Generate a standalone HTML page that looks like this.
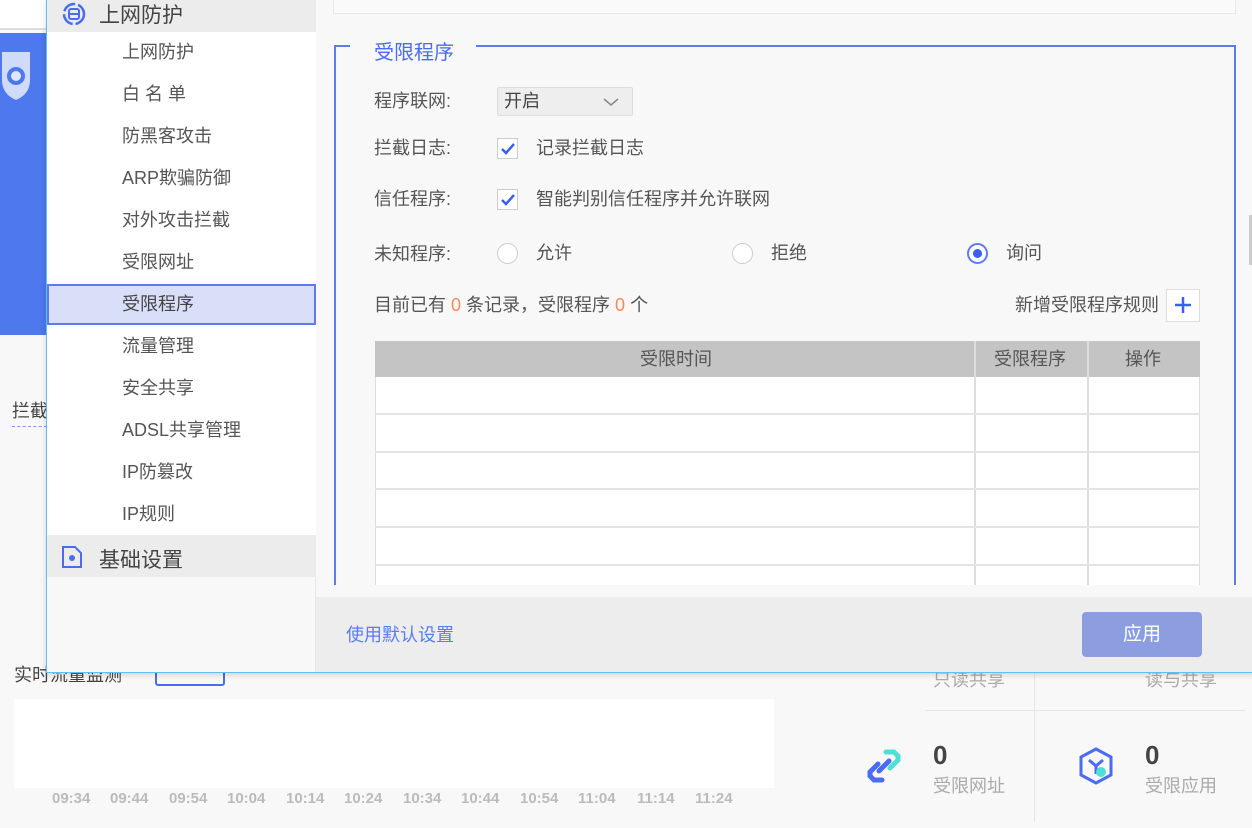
<!DOCTYPE html>
<html><head><meta charset="utf-8"><style>
*{margin:0;padding:0;box-sizing:border-box}
body{width:1252px;height:828px;overflow:hidden;background:#f8f8f8;font-family:"Liberation Sans","Noto Sans CJK SC",sans-serif;position:relative;color:#555}
.a{position:absolute}
.t{font-size:18px;color:#555;white-space:nowrap;line-height:24px}
.tm{position:absolute;top:790px;font-size:15px;font-weight:bold;color:#bbb}
</style></head><body>
<!-- background app -->
<div class="a" style="left:0;top:0;width:47px;height:30px;background:#fff;border-bottom:2px solid #ddd"></div>
<div class="a" style="left:0;top:33px;width:47px;height:302px;background:#4d78ee"></div>
<svg class="a" style="left:0;top:48px" width="34" height="54" viewBox="0 0 34 54"><path d="M2 4 L30 4 L30 32 Q30 46 16 52 Q2 46 2 32Z" fill="#dfe6fb" opacity=".9"/><circle cx="16" cy="28" r="9" fill="#4d78ee"/><circle cx="16" cy="28" r="5" fill="#dfe6fb"/></svg>
<div class="a t" style="left:12px;top:399px;color:#444">拦截</div>
<div class="a" style="left:12px;top:426px;width:35px;border-top:1px dashed #7c96ee"></div>
<div class="a t" style="left:14px;top:663px;color:#444">实时流量监测</div>
<div class="a" style="left:155px;top:664px;width:70px;height:22px;border:2px solid #4a6cf0;border-radius:3px"></div>
<div class="a" style="left:14px;top:699px;width:760px;height:89px;background:#fff"></div>
<div class="tm" style="left:52px">09:34</div><div class="tm" style="left:110px">09:44</div><div class="tm" style="left:169px">09:54</div><div class="tm" style="left:227px">10:04</div><div class="tm" style="left:286px">10:14</div><div class="tm" style="left:344px">10:24</div><div class="tm" style="left:403px">10:34</div><div class="tm" style="left:461px">10:44</div><div class="tm" style="left:520px">10:54</div><div class="tm" style="left:578px">11:04</div><div class="tm" style="left:637px">11:14</div><div class="tm" style="left:695px">11:24</div>
<div class="a" style="left:1034px;top:672px;width:1px;height:150px;background:#e5e5e5"></div>
<div class="a" style="left:925px;top:710px;width:320px;height:1px;background:#e5e5e5"></div>
<div class="a t" style="left:933px;top:668px;color:#aaa">只读共享</div>
<div class="a t" style="left:1145px;top:668px;color:#aaa">读与共享</div>
<div class="a" style="left:933px;top:740px;font-size:26px;font-weight:bold;color:#444">0</div>
<div class="a t" style="left:933px;top:774px;color:#aaa">受限网址</div>
<div class="a" style="left:1145px;top:740px;font-size:26px;font-weight:bold;color:#444">0</div>
<div class="a t" style="left:1145px;top:774px;color:#aaa">受限应用</div>
<svg class="a" style="left:864px;top:746px" width="40" height="40" viewBox="0 0 40 40"><path d="M22 6 L30 6 L34 10 L34 14 L26 22" stroke="#4fe0d4" stroke-width="5" fill="none" stroke-linecap="round"/><path d="M18 34 L10 34 L6 30 L6 26 L14 18" stroke="#4a6cf0" stroke-width="5" fill="none" stroke-linecap="round"/><path d="M15 25 L25 15" stroke="#4a6cf0" stroke-width="5" stroke-linecap="round"/></svg>
<svg class="a" style="left:1076px;top:746px" width="40" height="40" viewBox="0 0 40 40"><path d="M20 3 L35 11 L35 29 L20 37 L5 29 L5 11Z" stroke="#4a6cf0" stroke-width="3" fill="none"/><path d="M13 14 L20 20 L27 14 M20 20 L20 28" stroke="#4a6cf0" stroke-width="3" fill="none"/><circle cx="25" cy="26" r="5" fill="#4fe0d4"/></svg>

<!-- dialog -->
<div class="a" style="left:46px;top:-2px;width:1210px;height:675px;border:1px solid #5bc3ee;background:#f8f8f8;box-shadow:0 2px 6px rgba(0,0,0,.15)"></div>
<div class="a" style="left:47px;top:0;width:269px;height:672px;background:#f8f8f8;border-right:1px solid #e6e6e6"></div>
<div class="a" style="left:47px;top:0;width:269px;height:32px;background:#ececec"></div>
<div class="a" style="left:47px;top:32px;width:269px;height:503px;background:#fff"></div>
<div class="a" style="left:47px;top:535px;width:269px;height:42px;background:#ececec"></div>
<svg class="a" style="left:61px;top:2px" width="26" height="24" viewBox="0 0 26 24"><circle cx="13" cy="12" r="10" stroke="#4a6cf0" stroke-width="2.5" fill="none" stroke-dasharray="14 3"/><rect x="8" y="7" width="10" height="10" rx="2" stroke="#4a6cf0" stroke-width="2" fill="none"/><path d="M8 12 H18" stroke="#4a6cf0" stroke-width="2"/></svg>
<div class="a" style="left:99px;top:-1px;font-size:21px;color:#444">上网防护</div>
<div class="a" style="left:47px;top:284px;width:269px;height:41px;background:#d9def9;border:2px solid #5a7cf0"></div>
<div class="a t" style="left:122px;top:40px">上网防护</div>
<div class="a t" style="left:122px;top:82px">白 名 单</div>
<div class="a t" style="left:122px;top:124px">防黑客攻击</div>
<div class="a t" style="left:122px;top:166px">ARP欺骗防御</div>
<div class="a t" style="left:122px;top:208px">对外攻击拦截</div>
<div class="a t" style="left:122px;top:250px">受限网址</div>
<div class="a t" style="left:122px;top:292px;color:#444">受限程序</div>
<div class="a t" style="left:122px;top:334px">流量管理</div>
<div class="a t" style="left:122px;top:376px">安全共享</div>
<div class="a t" style="left:122px;top:418px">ADSL共享管理</div>
<div class="a t" style="left:122px;top:460px">IP防篡改</div>
<div class="a t" style="left:122px;top:502px">IP规则</div>
<svg class="a" style="left:61px;top:545px" width="22" height="24" viewBox="0 0 22 24"><path d="M2 2 H14 L20 8 V22 H2Z" stroke="#4a6cf0" stroke-width="2" fill="none"/><circle cx="11" cy="13" r="3" fill="#4a6cf0"/></svg>
<div class="a" style="left:99px;top:544px;font-size:21px;color:#444">基础设置</div>

<!-- content -->
<div class="a" style="left:333px;top:-2px;width:903px;height:16px;border:1px solid #e8e8e8;background:#fafafa"></div>
<div class="a" style="left:334px;top:45px;width:902px;height:560px;border:2px solid #5a7cf0;border-bottom:none"></div>
<div class="a" style="left:350px;top:36px;width:126px;height:20px;background:#f8f8f8"></div>
<div class="a" style="left:374px;top:36px;font-size:20px;color:#4a6cf0">受限程序</div>
<div class="a t" style="left:374px;top:89px">程序联网:</div>
<div class="a" style="left:497px;top:87px;width:136px;height:29px;border:1px solid #ddd;background:#eee;border-radius:2px"></div>
<div class="a t" style="left:504px;top:89px;color:#444">开启</div>
<svg class="a" style="left:602px;top:96px" width="18" height="12"><path d="M2 3 L9 9 L16 3" stroke="#888" stroke-width="1.5" fill="none"/></svg>
<div class="a t" style="left:374px;top:136px">拦截日志:</div>
<div class="a" style="left:497px;top:138px;width:21px;height:21px;border:1px solid #ccc;background:#fff"></div>
<svg class="a" style="left:499px;top:140px" width="18" height="18"><path d="M3 9 L7 13 L15 4" stroke="#3a5ef0" stroke-width="2.5" fill="none"/></svg>
<div class="a t" style="left:536px;top:136px">记录拦截日志</div>
<div class="a t" style="left:374px;top:187px">信任程序:</div>
<div class="a" style="left:497px;top:189px;width:21px;height:21px;border:1px solid #ccc;background:#fff"></div>
<svg class="a" style="left:499px;top:191px" width="18" height="18"><path d="M3 9 L7 13 L15 4" stroke="#3a5ef0" stroke-width="2.5" fill="none"/></svg>
<div class="a t" style="left:536px;top:187px">智能判别信任程序并允许联网</div>
<div class="a t" style="left:374px;top:242px">未知程序:</div>
<div class="a" style="left:497px;top:243px;width:21px;height:21px;border:1px solid #ccc;border-radius:50%;background:#fff"></div>
<div class="a t" style="left:536px;top:241px">允许</div>
<div class="a" style="left:732px;top:243px;width:21px;height:21px;border:1px solid #ccc;border-radius:50%;background:#fff"></div>
<div class="a t" style="left:771px;top:241px">拒绝</div>
<div class="a" style="left:967px;top:243px;width:21px;height:21px;border:2px solid #5a7cf0;border-radius:50%;background:#fff"></div>
<div class="a" style="left:973px;top:249px;width:9px;height:9px;border-radius:50%;background:#3a5ef0"></div>
<div class="a t" style="left:1006px;top:241px">询问</div>
<div class="a t" style="left:374px;top:293px">目前已有 <span style="color:#f5895a">0</span> 条记录，受限程序 <span style="color:#f5895a">0</span> 个</div>
<div class="a t" style="left:1015px;top:293px">新增受限程序规则</div>
<div class="a" style="left:1166px;top:289px;width:34px;height:33px;border:1px solid #ddd;background:#fff"></div>
<svg class="a" style="left:1173px;top:295px" width="20" height="20"><path d="M10 2 V18 M2 10 H18" stroke="#3a5ef0" stroke-width="2.5"/></svg>
<div class="a" style="left:375px;top:341px;width:825px;height:260px;background:#fff;border:1px solid #ddd"></div>
<div class="a" style="left:375px;top:341px;width:825px;height:36px;background:#c4c4c4"></div>
<div class="a t" style="left:640px;top:347px">受限时间</div>
<div class="a t" style="left:994px;top:347px">受限程序</div>
<div class="a t" style="left:1125px;top:347px">操作</div>
<div class="a" style="left:974px;top:341px;width:2px;height:260px;background:#ddd"></div>
<div class="a" style="left:1087px;top:341px;width:2px;height:260px;background:#ddd"></div>
<div class="a" style="left:375px;top:413px;width:825px;height:2px;background:#e4e4e4"></div>
<div class="a" style="left:375px;top:451px;width:825px;height:2px;background:#e4e4e4"></div>
<div class="a" style="left:375px;top:488px;width:825px;height:2px;background:#e4e4e4"></div>
<div class="a" style="left:375px;top:526px;width:825px;height:2px;background:#e4e4e4"></div>
<div class="a" style="left:375px;top:564px;width:825px;height:2px;background:#e4e4e4"></div>
<div class="a" style="left:316px;top:585px;width:936px;height:12px;background:#f8f8f8"></div>
<div class="a" style="left:316px;top:597px;width:936px;height:75px;background:#ededed"></div>
<div class="a t" style="left:346px;top:623px;color:#5a7cf0">使用默认设置</div>
<div class="a" style="left:1082px;top:612px;width:120px;height:45px;background:#8c9edf;border-radius:4px;color:#fff;font-size:19px;text-align:center;line-height:45px">应用</div>
<div class="a" style="left:1249px;top:215px;width:3px;height:50px;background:#ccc"></div>
</body></html>
